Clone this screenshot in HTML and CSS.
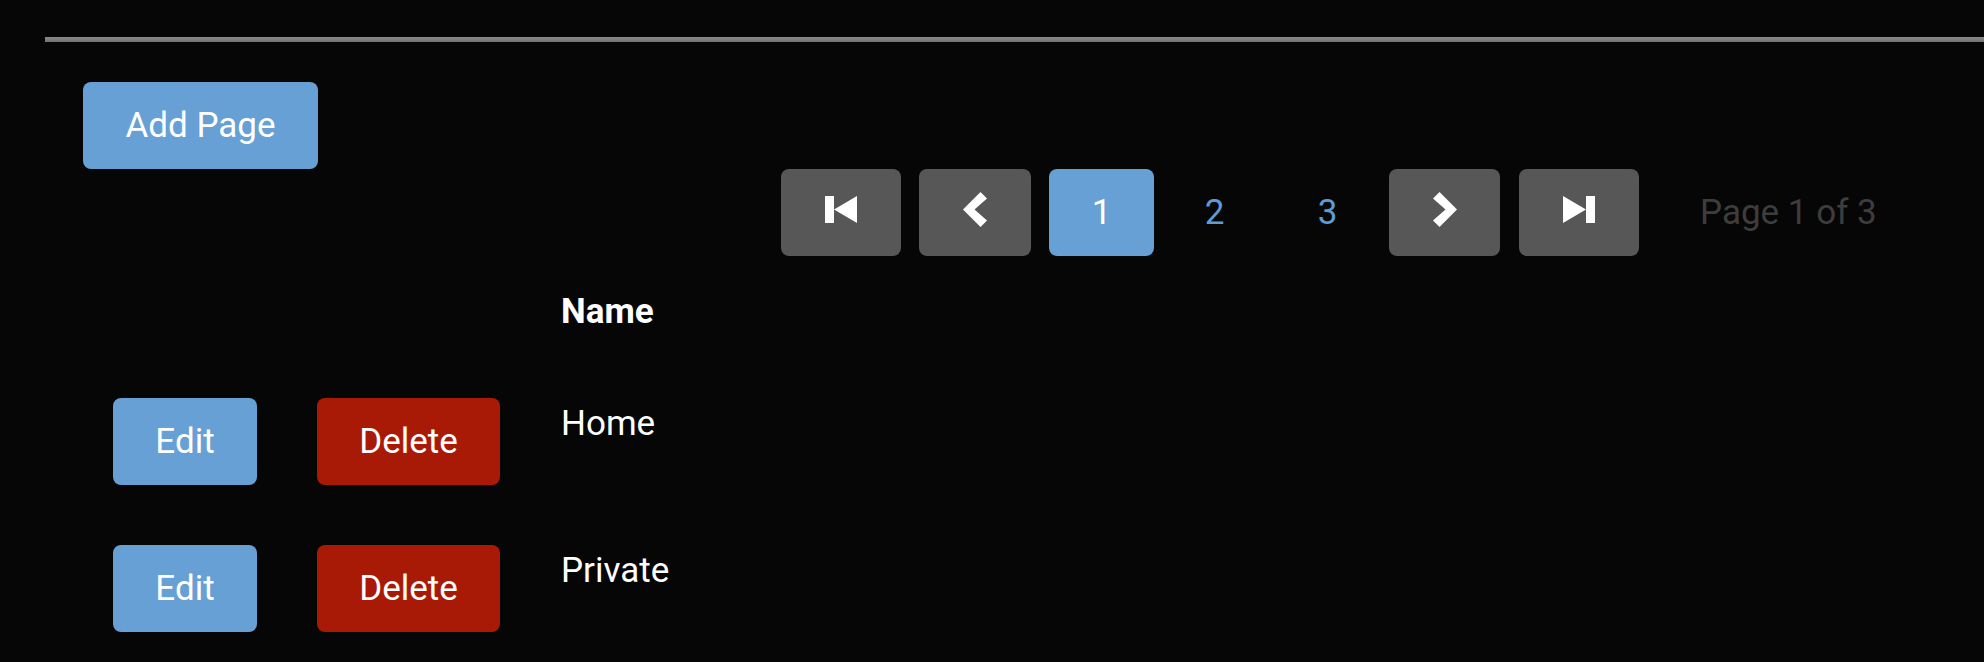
FILE: index.html
```html
<!DOCTYPE html>
<html lang="en">
<head>
<meta charset="utf-8">
<title>Pages</title>
<link rel="stylesheet" href="styles.css">
</head>
<body>
<div class="rule"></div>
<main class="content">
  <div class="toolbar">
    <button class="btn btn-primary btn-add">Add Page</button>
  </div>
  <nav class="pager">
    <button class="pg pg-btn pg-first" aria-label="First">
      <svg width="32" height="27" viewBox="0 0 32 27"><rect x="0" y="0" width="9" height="27" fill="#fff"/><polygon points="9,13.5 32,0 32,27" fill="#fff"/></svg>
    </button>
    <button class="pg pg-btn pg-prev" aria-label="Previous">
      <svg width="24" height="35" viewBox="0 0 24 35"><polygon points="0,17.5 17.5,0 24,6.5 11.5,17.5 24,28.5 17.5,35" fill="#fff"/></svg>
    </button>
    <span class="pg pg-num pg-active">1</span>
    <a class="pg pg-num pg-link pg-two">2</a>
    <a class="pg pg-num pg-link pg-three">3</a>
    <button class="pg pg-btn pg-next" aria-label="Next">
      <svg width="24" height="35" viewBox="0 0 24 35"><polygon points="24,17.5 6.5,0 0,6.5 12.5,17.5 0,28.5 6.5,35" fill="#fff"/></svg>
    </button>
    <button class="pg pg-btn pg-last" aria-label="Last">
      <svg width="32" height="27" viewBox="0 0 32 27"><polygon points="0,0 23,13.5 0,27" fill="#fff"/><rect x="23" y="0" width="9" height="27" fill="#fff"/></svg>
    </button>
    <span class="pg-info">Page 1 of 3</span>
  </nav>
  <table class="grid">
    <thead>
      <tr><th></th><th></th><th class="col-name">Name</th></tr>
    </thead>
    <tbody>
      <tr>
        <td><button class="btn btn-primary btn-edit">Edit</button></td>
        <td><button class="btn btn-danger btn-delete">Delete</button></td>
        <td class="col-name">Home</td>
      </tr>
      <tr>
        <td><button class="btn btn-primary btn-edit">Edit</button></td>
        <td><button class="btn btn-danger btn-delete">Delete</button></td>
        <td class="col-name">Private</td>
      </tr>
    </tbody>
  </table>
</main>
</body>
</html>
```

FILE: styles.css
```css
html, body {
  margin: 0;
  padding: 0;
  background: #060606;
  color: #ffffff;
  font-family: Roboto, "Liberation Sans", sans-serif;
  font-size: 35px;
  line-height: 52px;
  overflow: hidden;
}

.rule {
  margin: 37px 0 0 45px;
  height: 5px;
  background: linear-gradient(#8a8a8a, #727272);
}

.content {
  padding: 40px 0 0 83px;
}

.btn {
  display: inline-flex;
  align-items: center;
  justify-content: center;
  height: 87px;
  border: none;
  border-radius: 8px;
  padding: 0;
  margin: 0;
  color: #ffffff;
  font-family: inherit;
  font-size: 35px;
  line-height: 52px;
  cursor: pointer;
}

.btn-primary { background: #66a0d4; }
.btn-danger { background: #a91a06; }

.btn-add { width: 235px; }
.btn-edit { width: 144px; }
.btn-delete { width: 183px; }

.toolbar {
  display: flex;
  height: 87px;
}

.pager {
  display: flex;
  align-items: center;
  height: 87px;
  margin-left: 698px;
}

.pg {
  display: flex;
  align-items: center;
  justify-content: center;
  height: 87px;
  border-radius: 8px;
  font-size: 35px;
  box-sizing: border-box;
}

.pg-btn {
  background: #575757;
  border: none;
  padding: 0;
}

.pg-btn svg {
  display: block;
  margin-bottom: 6px;
}

.pg-first { width: 120px; }
.pg-prev { width: 112px; margin-left: 18px; }
.pg-active { width: 105px; margin-left: 18px; background: #66a0d4; color: #ffffff; }
.pg-link { width: 105px; color: #5d9cd6; text-decoration: none; }
.pg-two { margin-left: 8px; }
.pg-three { margin-left: 8px; }
.pg-next { width: 111px; margin-left: 9px; }
.pg-last { width: 120px; margin-left: 19px; }

.pg-info {
  margin-left: 61px;
  color: #3d3d3d;
}

.grid {
  border-collapse: collapse;
}

.grid th,
.grid td {
  padding: 30px;
  vertical-align: top;
  text-align: left;
}

.grid .col-name {
  padding-left: 31px;
}

.grid th {
  font-weight: 700;
}

.grid td .btn {
  display: flex;
}
```
